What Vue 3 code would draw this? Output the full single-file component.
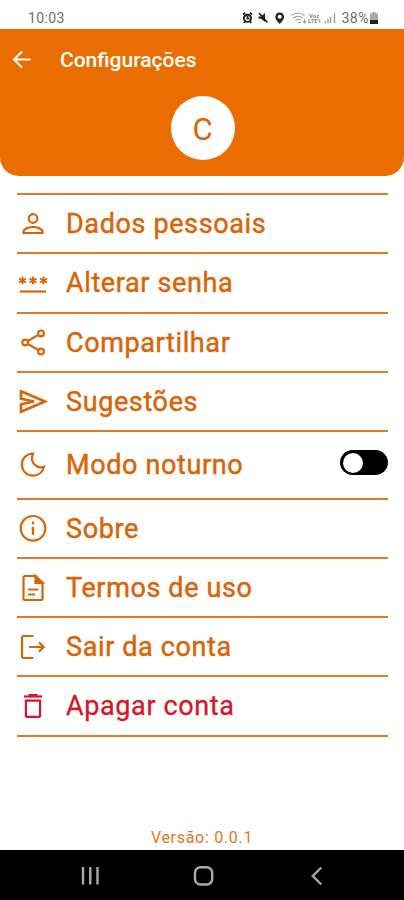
<script setup>
import { ref } from 'vue'

const night = ref(false)
const rows = [
  { icon: 'user', label: 'Dados pessoais', height: 59 },
  { icon: 'password', label: 'Alterar senha', height: 60 },
  { icon: 'share', label: 'Compartilhar', height: 59 },
  { icon: 'send', label: 'Sugestões', height: 59 },
  { icon: 'moon', label: 'Modo noturno', height: 68, toggle: true },
  { icon: 'info', label: 'Sobre', height: 59 },
  { icon: 'doc', label: 'Termos de uso', height: 59 },
  { icon: 'exit', label: 'Sair da conta', height: 59 },
  { icon: 'trash', label: 'Apagar conta', height: 60, danger: true },
]
</script>

<template>
  <div class="screen">
    <div class="status">
      <span class="time">10:03</span>
      <svg class="indicators" width="98" height="14" viewBox="0 0 98 14">
        <g fill="none" stroke="#222" stroke-width="1.9">
          <circle cx="4.500" cy="7.300" r="3.600" />
          <path d="M0 3.400 2.100 1.800M9.100 3.400 6.900 1.800M.8 12l1.300-1.500M8.200 12l-1.300-1.500M4.500 5v2.600h2" />
        </g>
        <path d="M15.500 5.500H18l4-3.500v9l-4-3.200h-2.500z" fill="#222" />
        <path d="M16 2l8.500 9.500" stroke="#222" stroke-width="1.500" />
        <path d="M36.700 1.500a4.400 4.400 0 0 0-4.400 4.400c0 3 4.400 6.800 4.400 6.800s4.400-3.800 4.400-6.800a4.400 4.400 0 0 0-4.400-4.400z" fill="#222" />
        <circle cx="36.700" cy="5.700" r="2" fill="#fff" />
        <g fill="none" stroke="#999" stroke-width="1.100">
          <path d="M48.500 4.500q6.500-5 13 0M50.500 7q4.500-3.400 9 0M52.500 9.300q2.700-2 5 0M55 11.500h3M61.500 8v4M60 10.500l1.500 1.500 1.500-1.500" />
        </g>
        <text x="66" y="6.500" class="tiny">Voz</text>
        <text x="65" y="12.200" class="tiny">LTE1</text>
        <path d="M82.500 12v-2M85 12V8M87.500 12V6M91.500 12V2" stroke="#999" stroke-width="1.300" />
      </svg>
      <span class="percent">38%</span>
      <svg class="battery" width="8" height="12" viewBox="0 0 8 12">
        <path d="M2.500 0h3v1.200H8V12H0V1.200h2.500z" fill="#aaa" />
        <path d="M0 8h8v4H0z" fill="#222" />
      </svg>
    </div>

    <header class="header">
      <div class="bar">
        <svg class="back" width="20" height="20" viewBox="0 0 20 20" fill="none" stroke="#fff" stroke-width="2">
          <path d="M18.500 9.500H2.200M10 1.500 2 9.500l8 8" />
        </svg>
        <h1 class="title">Configurações</h1>
      </div>
      <div class="avatar">C</div>
    </header>

    <main class="list">
      <div
        v-for="row in rows"
        :key="row.icon"
        class="row"
        :class="{ danger: row.danger }"
        :style="{ height: row.height + 'px' }"
      >
        <svg class="icon" width="32" height="32" viewBox="0 0 32 32" fill="none" stroke="currentColor" stroke-width="2.200">
          <template v-if="row.icon === 'user'">
            <circle cx="16" cy="10.500" r="4.300" />
            <path d="M6.500 25v-1.200c0-3.400 6.300-4.800 9.500-4.800s9.500 1.400 9.500 4.800V25z" />
          </template>
          <template v-else-if="row.icon === 'password'">
            <path d="M3 24.500h26" />
            <path
              v-for="x in [5.500, 16, 26.500]"
              :key="x"
              :transform="`translate(${x} 13.500)`"
              d="M0-3.800v7.600M-3.500-2l7 4M-3.500 2l7-4"
              stroke-width="2"
            />
          </template>
          <template v-else-if="row.icon === 'share'">
            <path d="M11 14 20.800 8.100M11 17l9.800 5.800" />
            <circle cx="8.200" cy="15.500" r="2.900" />
            <circle cx="24" cy="6.400" r="2.900" />
            <circle cx="24" cy="24.600" r="2.900" />
          </template>
          <path v-else-if="row.icon === 'send'" d="M4 5.300 28 15.500 4 25.800v-7.600l13-2.700-13-2.700z" stroke-width="2.600" />
          <path v-else-if="row.icon === 'moon'" d="M16 4.500C9.500 4.700 4.900 9.500 4.900 15.700c0 6.200 4.900 11 11 11 5.600 0 9.900-3.700 11.100-9-7.200 2.600-14.600-4-11-13.200z" />
          <template v-else-if="row.icon === 'info'">
            <circle cx="16" cy="15.300" r="12.300" />
            <path d="M16 14v8M16 8.600v2.600" stroke-width="2.300" />
          </template>
          <template v-else-if="row.icon === 'doc'">
            <path d="M8.200 4h10.300l7 7v15.400c0 1-.6 1.600-1.600 1.600H8.200c-1 0-1.700-.6-1.700-1.600V5.600C6.500 4.600 7.200 4 8.200 4zM11 17.500h10.500M11 22.500h7" />
            <path d="M18.500 4v7h7z" fill="currentColor" />
          </template>
          <path v-else-if="row.icon === 'exit'" d="M16.500 5H6.800C5.700 5 5 5.700 5 6.800v18.400c0 1.100.7 1.800 1.800 1.800h9.700M12 16h14.500M22 11.200l4.700 4.800-4.700 4.800" />
          <template v-else>
            <path d="M7 6.500h18" />
            <path d="M11.500 5.500h9" stroke-width="3" />
            <path d="M8.900 10.600h14.200v14.600c0 1-.7 1.700-1.700 1.700H10.600c-1 0-1.700-.7-1.700-1.700z" />
          </template>
        </svg>
        <span class="label">{{ row.label }}</span>
        <button v-if="row.toggle" class="switch" :class="{ on: night }" @click="night = !night">
          <span class="knob"></span>
        </button>
      </div>
    </main>

    <div class="version">Versão: 0.0.1</div>

    <nav class="nav">
      <svg width="404" height="50" viewBox="0 0 404 50" fill="none" stroke="#aaa" stroke-width="2.400">
        <path d="M83 17v17.500M90.300 17v17.500M97.500 17v17.500" />
        <rect x="195" y="17.300" width="17.200" height="17.200" rx="5.500" />
        <path d="M321.300 17.500 312.800 26l8.500 8.500" />
      </svg>
    </nav>
  </div>
</template>

<style>
body {
  margin: 0;
}
</style>

<style scoped>
.screen {
  width: 404px;
  height: 900px;
  display: flex;
  flex-direction: column;
  overflow: hidden;
  background: #fff;
  color: #d96407;
  font-family: Roboto, sans-serif;
}
.status {
  box-sizing: border-box;
  height: 29px;
  padding: 6px 26px 0 28px;
  display: flex;
  align-items: center;
  flex: none;
  color: #6d6d6d;
  font-size: 14px;
}
.time {
  letter-spacing: 0.35px;
}
.indicators {
  margin-left: auto;
}
.tiny {
  font-size: 6px;
  font-weight: 700;
  fill: #888;
}
.percent {
  margin-left: 1px;
  letter-spacing: 0.5px;
}
.battery {
  margin-left: 1px;
}
.header {
  height: 147px;
  flex: none;
  border-radius: 0 0 19px 19px;
  background: #e96d00;
}
.bar {
  height: 61px;
  padding-left: 12px;
  display: flex;
  align-items: center;
}
.title {
  margin: 0 0 0 28px;
  color: #fff;
  font-size: 21px;
  font-weight: 500;
}
.avatar {
  position: relative;
  left: 0.700px;
  width: 64px;
  height: 64px;
  margin: 6px auto 0;
  padding-top: 2px;
  box-sizing: border-box;
  border-radius: 50%;
  background: #fff;
  font-size: 31px;
  line-height: 64px;
  text-align: center;
}
.list {
  margin: 17px 16px 0 17px;
  border-top: 2px solid #df7a2d;
}
.row {
  box-sizing: border-box;
  display: flex;
  align-items: center;
  border-bottom: 2px solid #df7a2d;
}
.icon {
  flex: none;
}
.label {
  margin-left: 17px;
  font-size: 27px;
  font-weight: 400;
  letter-spacing: 0.62px;
  -webkit-text-stroke: 0.45px currentColor;
}
.danger .icon,
.danger .label {
  color: #d41626;
}
.danger .label {
  -webkit-text-stroke-width: 0.3px;
}
.switch {
  width: 48px;
  height: 25px;
  margin: 0 0 5px auto;
  padding: 0 3px;
  display: flex;
  align-items: center;
  border: 0;
  border-radius: 13px;
  background: #000;
}
.switch.on {
  justify-content: flex-end;
}
.knob {
  width: 20px;
  height: 20px;
  border-radius: 50%;
  background: #fff;
}
.version {
  margin: auto 0 3px;
  font-size: 16px;
  line-height: 19px;
  letter-spacing: 0.7px;
  text-align: center;
  color: #dc781f;
}
.nav {
  height: 50px;
  flex: none;
  background: #000;
}
</style>
